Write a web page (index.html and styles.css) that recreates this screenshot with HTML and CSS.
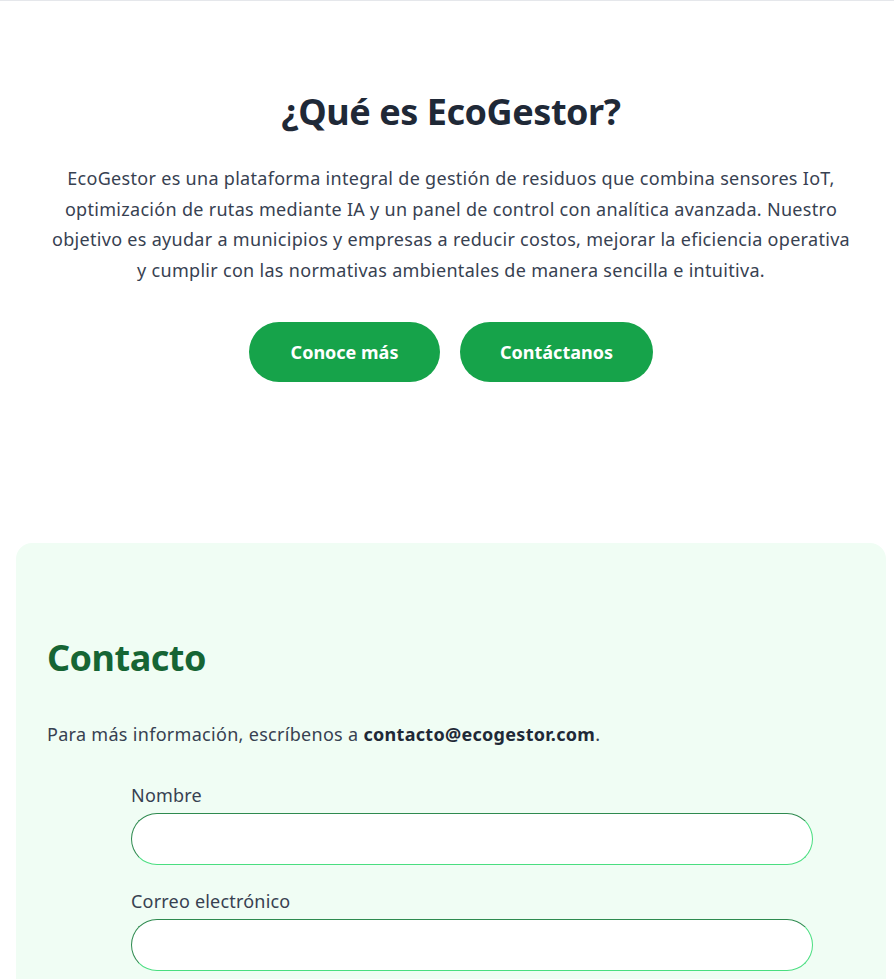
FILE: index.html
```html
<!DOCTYPE html>
<html lang="es">
<head>
<meta charset="utf-8">
<title>EcoGestor</title>
<link rel="stylesheet" href="styles.css">
</head>
<body>
<div class="page">
  <section class="about">
    <h2 class="about-title">¿Qué es EcoGestor?</h2>
    <p class="about-text">EcoGestor es una plataforma integral de gestión de residuos que combina sensores IoT, optimización de rutas mediante IA y un panel de control con analítica avanzada. Nuestro objetivo es ayudar a municipios y empresas a reducir costos, mejorar la eficiencia operativa y cumplir con las normativas ambientales de manera sencilla e intuitiva.</p>
    <div class="actions">
      <a class="btn btn-1" href="#">Conoce más</a>
      <a class="btn btn-2" href="#">Contáctanos</a>
    </div>
  </section>
  <section class="contact">
    <h2 class="contact-title">Contacto</h2>
    <p class="contact-text">Para más información, escríbenos a <strong>contacto@ecogestor.com</strong>.</p>
    <form class="form">
      <label class="label" for="n">Nombre</label>
      <input class="input" id="n" type="text">
      <label class="label label-2" for="e">Correo electrónico</label>
      <input class="input" id="e" type="email">
    </form>
  </section>
</div>
</body>
</html>
```
FILE: styles.css
```css
html, body {
  margin: 0;
  padding: 0;
  background: #ffffff;
}
body {
  font-family: "Noto Sans", "Open Sans", sans-serif;
  color: #374151;
  border-top: 1px solid #e5e7eb;
}
.page {
  padding-left: 8px;
}
.about {
  padding-top: 89px;
  text-align: center;
}
.about-title {
  margin: 0 0 30px;
  font-size: 36px;
  line-height: 43px;
  font-weight: 700;
  letter-spacing: -0.45px;
  color: #1f2937;
}
.about-text {
  margin: 0 auto;
  max-width: 808px;
  font-size: 18px;
  line-height: 30.6px;
  letter-spacing: 0.3px;
}
.actions {
  margin-top: 37px;
  display: flex;
  justify-content: center;
  gap: 20px;
}
.btn {
  display: flex;
  align-items: center;
  justify-content: center;
  height: 60px;
  border-radius: 30px;
  background: #16a34a;
  color: #ffffff;
  font-size: 18px;
  font-weight: 700;
  text-decoration: none;
}
.btn-1 { width: 191px; }
.btn-2 { width: 193px; }
.contact {
  margin: 161px 8px 0;
  background: #f0fdf4;
  border-radius: 16px;
  padding: 93px 31px 40px;
}
.contact-title {
  margin: 0 0 40px;
  font-size: 36px;
  line-height: 43px;
  font-weight: 700;
  letter-spacing: -0.5px;
  color: #166534;
}
.contact-text {
  margin: 0;
  font-size: 18px;
  line-height: 30.6px;
  letter-spacing: 0.3px;
}
.contact-text strong {
  color: #1f2937;
}
.form {
  margin: 32px 0 0 84px;
  width: 682px;
  display: flex;
  flex-direction: column;
}
.label {
  font-size: 18px;
  line-height: 27px;
  margin-bottom: 4px;
  letter-spacing: 0.2px;
}
.label-2 {
  margin-top: 23px;
}
.input {
  box-sizing: border-box;
  height: 52px;
  border: 1px inset #4ade80;
  border-radius: 26px;
  background: #ffffff;
  padding: 0 20px;
  font-size: 18px;
}
```
